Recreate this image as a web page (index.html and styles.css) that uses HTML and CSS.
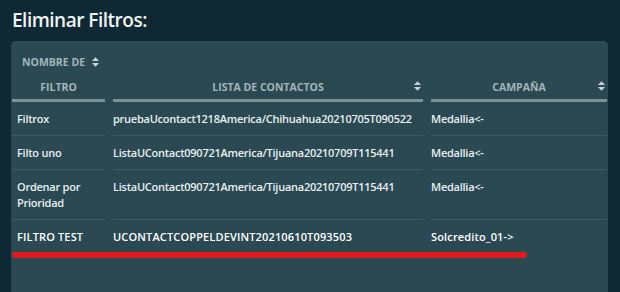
FILE: index.html
```html
<!DOCTYPE html>
<html lang="es">
<head>
<meta charset="utf-8">
<title>Eliminar Filtros</title>
<link rel="stylesheet" href="styles.css">
</head>
<body>
<h1 class="title">Eliminar Filtros:</h1>
<div class="panel">
  <div class="grid">
    <div class="th th-first">
      <div class="th-line1"><span>NOMBRE DE</span><svg class="sort" viewBox="0 0 8 11"><path d="M4 0L8 4.3H0Z M4 11L8 6.7H0Z"/></svg></div>
      <div class="th-line2">FILTRO</div>
    </div>
    <div class="th th-sort">
      <div class="th-line2 center">LISTA DE CONTACTOS</div>
      <svg class="sort sort-right" viewBox="0 0 8 11"><path d="M4 0L8 4.3H0Z M4 11L8 6.7H0Z"/></svg>
    </div>
    <div class="th th-sort">
      <div class="th-line2 center">CAMPAÑA</div>
      <svg class="sort sort-right" viewBox="0 0 8 11"><path d="M4 0L8 4.3H0Z M4 11L8 6.7H0Z"/></svg>
    </div>

    <div class="td c1">Filtrox</div>
    <div class="td">pruebaUcontact1218America/Chihuahua20210705T090522</div>
    <div class="td">Medallia&lt;-</div>

    <div class="td c1">Filto uno</div>
    <div class="td">ListaUContact090721America/Tijuana20210709T115441</div>
    <div class="td">Medallia&lt;-</div>

    <div class="td c1">Ordenar por Prioridad</div>
    <div class="td">ListaUContact090721America/Tijuana20210709T115441</div>
    <div class="td">Medallia&lt;-</div>

    <div class="td c1 last">FILTRO TEST</div>
    <div class="td last">UCONTACTCOPPELDEVINT20210610T093503</div>
    <div class="td last">Solcredito_01-&gt;</div>
  </div>
  <div class="mark"></div>
</div>
</body>
</html>
```
FILE: styles.css
```css
html, body {
  margin: 0;
  padding: 0;
}
body {
  background: #0e2834;
  width: 620px;
  height: 292px;
  overflow: hidden;
  font-family: "Open Sans", "Noto Sans", sans-serif;
}
.title {
  margin: 0;
  padding: 8px 0 0 12px;
  height: 41px;
  box-sizing: border-box;
  font-size: 19px;
  line-height: 24px;
  font-weight: 600;
  color: #f2f5f6;
  letter-spacing: -0.5px;
}
.panel {
  position: relative;
  margin-left: 11px;
  width: 597px;
  height: 260px;
  background: #2a4953;
  border-radius: 5px;
  padding: 0 1px;
  box-sizing: border-box;
}
.grid {
  display: grid;
  grid-template-columns: 93px 310px 176px;
  column-gap: 8px;
}
.th {
  position: relative;
  padding-top: 12px;
  padding-bottom: 3px;
  border-bottom: 3px solid #7a9196;
  color: #a3b5b9;
  font-size: 10.5px;
  font-weight: 700;
  letter-spacing: 0;
}
.th-line1 {
  display: flex;
  align-items: center;
  height: 18px;
  padding-left: 10px;
  gap: 7px;
}
.th-line2 {
  height: 18px;
  line-height: 18px;
  margin-top: 7px;
  text-align: center;
}
.th-sort {
  display: flex;
  flex-direction: column;
  justify-content: flex-end;
}
.sort {
  width: 7px;
  height: 10px;
  fill: #c9d4d7;
}
.sort-right {
  position: absolute;
  right: 2px;
  bottom: 8px;
}
.td {
  padding: 9px 0 8px 0;
  border-bottom: 1px solid #3b5a63;
  color: #e9eef0;
  font-size: 11px;
  line-height: 16px;
  font-weight: 600;
  letter-spacing: -0.25px;
  white-space: nowrap;
}
.td.c1 {
  padding-left: 5px;
  white-space: normal;
}
.td.last {
  border-bottom: none;
  font-weight: 600;
  letter-spacing: 0.15px;
  color: #ffffff;
}
.mark {
  position: absolute;
  left: 1px;
  top: 211px;
  width: 515px;
  height: 6px;
  border-radius: 3px;
  background: #e01b1e;
}
```
